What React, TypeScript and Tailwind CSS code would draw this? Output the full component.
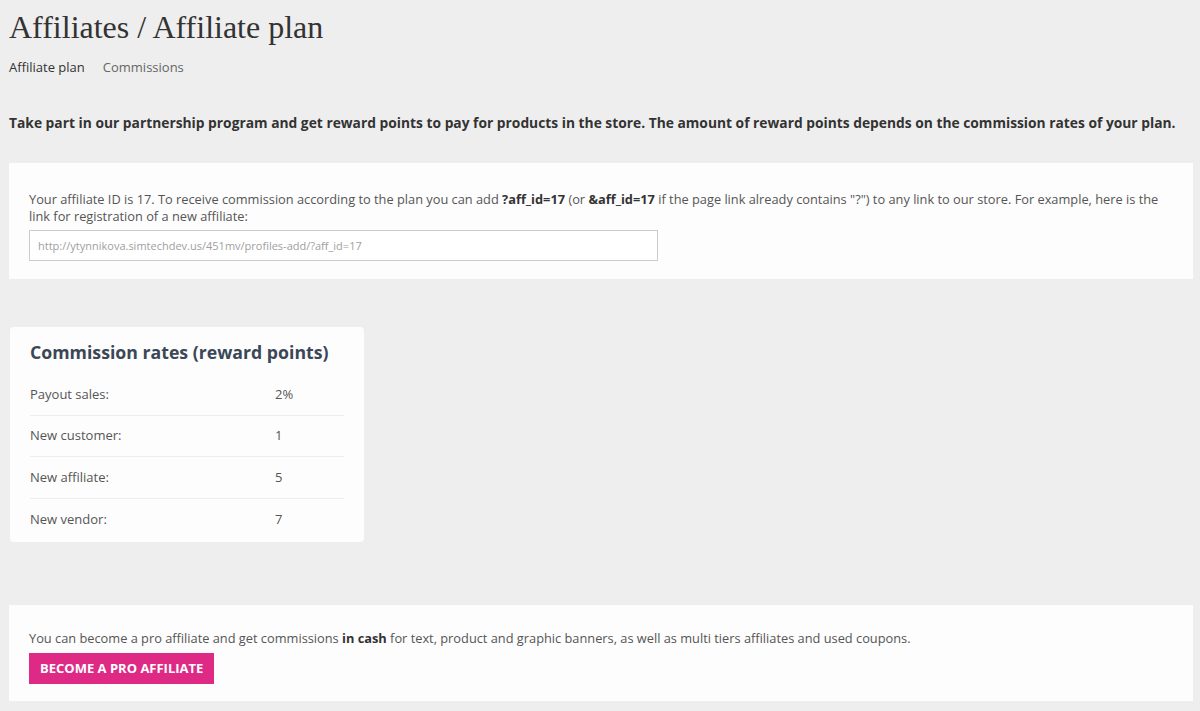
import React from "react";

const rates = [
    { label: "Payout sales:", value: "2%" },
    { label: "New customer:", value: "1" },
    { label: "New affiliate:", value: "5" },
    { label: "New vendor:", value: "7" },
];

export default function App() {
    return (
        <div
            className="min-h-[711px] bg-[#eeeeee] pl-[9px] pr-[7px] text-[#333333]"
            style={{ fontFamily: '"Open Sans", sans-serif' }}
        >
            {/* Page title */}
            <h1 className="pt-[7px] text-[32px] leading-[40px] text-[#333333] font-['Liberation_Serif',serif]">
                Affiliates / Affiliate plan
            </h1>

            {/* Tabs */}
            <div className="mt-[11px] flex gap-[18px] text-[13px] leading-[18px]">
                <span className="text-[#333333]">Affiliate plan</span>
                <span className="text-[#666666]">Commissions</span>
            </div>

            {/* Intro */}
            <p className="mt-[38px] text-[13.8px] font-bold leading-[18px] text-[#333333]">
                Take part in our partnership program and get reward points to pay for products in the store. The amount of reward points depends on the commission rates of your plan.
            </p>

            {/* Affiliate link panel */}
            <div className="mt-[31px] bg-[#fdfdfd] px-5 pt-[28px] pb-[18px]">
                <p className="text-[12.8px] leading-[17px] text-[#555555]">
                    Your affiliate ID is 17. To receive commission according to the plan you can add{" "}
                    <b className="text-[#333333]">?aff_id=17</b> (or <b className="text-[#333333]">&amp;aff_id=17</b> if the page link already contains "?") to any link to our store. For example, here is the link for registration of a new affiliate:
                </p>
                <input
                    readOnly
                    value="http://ytynnikova.simtechdev.us/451mv/profiles-add/?aff_id=17"
                    className="mt-[5px] h-[31px] w-[629px] border border-[#cccccc] bg-white px-[8px] text-[11px] text-[#a0a0a0] outline-none"
                />
            </div>

            {/* Commission rates */}
            <div className="mt-[48px] ml-px w-[354px] rounded-[4px] bg-[#fdfdfd] px-5 pt-[13px] pb-[2px]">
                <h2 className="text-[17.7px] font-bold leading-[24px] text-[#3b4756]">
                    Commission rates (reward points)
                </h2>
                <div className="mt-[10px]">
                    {rates.map((r, i) => (
                        <div
                            key={r.label}
                            className={
                                "flex h-[41.5px] items-center text-[13px] text-[#555555] " +
                                (i < rates.length - 1 ? "border-b border-[#eeeeee]" : "")
                            }
                        >
                            <span className="w-[245px]">{r.label}</span>
                            <span>{r.value}</span>
                        </div>
                    ))}
                </div>
            </div>

            {/* Pro affiliate */}
            <div className="mt-[63px] bg-[#fdfdfd] px-5 pt-[24px] pb-[17px]">
                <p className="text-[12.8px] leading-[18px] text-[#555555]">
                    You can become a pro affiliate and get commissions <b className="text-[#333333]">in cash</b> for text, product and graphic banners, as well as multi tiers affiliates and used coupons.
                </p>
                <button className="mt-[6px] h-[31px] bg-[#de2a85] px-[11px] text-[13px] font-bold uppercase text-white">
                    Become a pro affiliate
                </button>
            </div>
        </div>
    );
}
